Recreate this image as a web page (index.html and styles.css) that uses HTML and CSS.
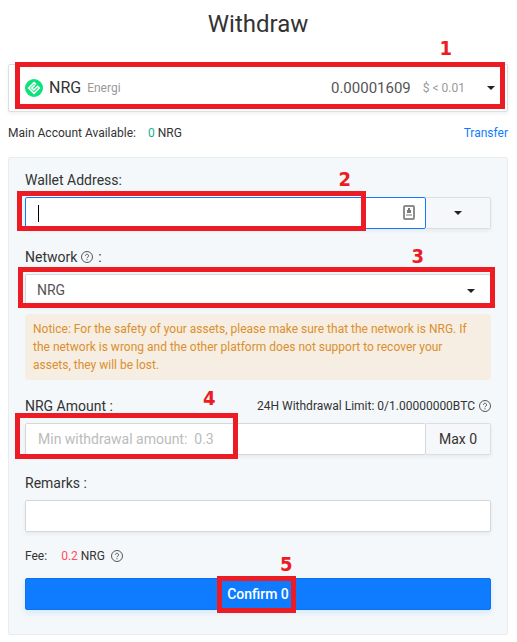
FILE: index.html
```html
<!DOCTYPE html>
<html lang="en">
<head>
<meta charset="utf-8">
<title>Withdraw</title>
<meta name="viewport" content="width=device-width, initial-scale=1">
<link rel="stylesheet" href="styles.css">
</head>
<body>
<svg width="0" height="0" class="defs" aria-hidden="true">
  <symbol id="help" viewBox="0 0 12 12">
    <circle cx="6" cy="6" r="5.5" fill="none" stroke="currentColor" stroke-width=".9"/>
    <path d="M4.4 4.700a1.600 1.500 0 1 1 2.500 1.300c-.6.4-.9.6-.9 1.200" fill="none" stroke="currentColor" stroke-width=".9"/>
    <path d="M5.500 8.200h1v1h-1z" fill="currentColor"/>
  </symbol>
  <symbol id="caret" viewBox="0 0 8 4">
    <path d="M0 0h8L4 4z" fill="currentColor"/>
  </symbol>
</svg>
<main class="page">
  <h1 class="title">Withdraw</h1>

  <div class="anchor">
    <button type="button" class="coin">
      <svg class="coin-logo" viewBox="0 0 18 18" aria-hidden="true">
        <circle cx="9" cy="9" r="9" fill="#0be27c"/>
        <path d="M11 5.500 9 3.700 3.700 9 9 14.300 14.300 9 12.600 7.300 8.800 11 6.800 9 9.800 6.200" fill="none" stroke="#fff" stroke-width="1.600"/>
      </svg>
      <span class="coin-code">NRG</span>
      <span class="coin-name">Energi</span>
      <span class="coin-balance">0.00001609</span>
      <span class="coin-value">$ &lt; 0.01</span>
      <svg class="caret"><use href="#caret"/></svg>
    </button>
    <span class="mark mark-coin"></span>
    <span class="step step-coin">1</span>
  </div>

  <div class="account">
    <span>Main Account Available:</span>
    <span class="account-sum"><span class="green">0</span> NRG</span>
    <a class="transfer" href="#">Transfer</a>
  </div>

  <form class="panel">
    <div class="field anchor">
      <div class="label-row"><label for="address">Wallet Address:</label></div>
      <div class="group">
        <input class="control control-active" id="address" type="text">
        <svg class="autofill" viewBox="0 0 12 15" aria-hidden="true">
          <rect x="1" y="1" width="10" height="13" rx="1" fill="#fff" stroke="#8c8c8c" stroke-width="2"/>
          <path d="M5 3h2v2h1v3H4V5h1z" fill="#777"/>
          <path d="M3 9h6v2H3z" fill="#bbb"/>
        </svg>
        <span class="cursor"></span>
        <button type="button" class="addon" aria-label="Saved addresses"><svg class="caret"><use href="#caret"/></svg></button>
      </div>
      <span class="mark mark-address"></span>
      <span class="step step-address">2</span>
    </div>

    <div class="field field-network anchor">
      <div class="label-row"><label for="network">Network</label><svg class="help"><use href="#help"/></svg><span class="colon">:</span></div>
      <div class="group">
        <select class="control" id="network"><option>NRG</option></select>
        <svg class="caret caret-select"><use href="#caret"/></svg>
      </div>
      <span class="mark mark-network"></span>
      <span class="step step-network">3</span>
    </div>

    <p class="notice">Notice: For the safety of your assets, please make sure that the network is NRG. If the network is wrong and the other platform does not support to recover your assets, they will be lost.</p>

    <div class="field anchor">
      <div class="label-row">
        <label for="amount">NRG Amount :</label>
        <span class="limit">24H Withdrawal Limit: 0/1.00000000BTC <svg class="help"><use href="#help"/></svg></span>
      </div>
      <div class="group">
        <input class="control" id="amount" type="text" placeholder="Min withdrawal amount:&nbsp; 0.3">
        <button type="button" class="addon">Max 0</button>
      </div>
      <span class="mark mark-amount"></span>
      <span class="step step-amount">4</span>
    </div>

    <div class="field">
      <div class="label-row"><label for="remarks">Remarks :</label></div>
      <div class="group"><input class="control" id="remarks" type="text"></div>
    </div>

    <div class="fee"><span>Fee:</span><span class="fee-sum"><span class="red">0.2</span> NRG</span><svg class="help"><use href="#help"/></svg></div>

    <div class="anchor">
      <button type="button" class="confirm">Confirm 0</button>
      <span class="mark mark-confirm"></span>
      <span class="step step-confirm">5</span>
    </div>
  </form>
</main>
</body>
</html>
```
FILE: styles.css
```css
* { box-sizing: border-box; }

body {
  margin: 0;
  background: #fff;
  color: #333;
  font: 14px/20px Roboto, "Liberation Sans", sans-serif;
}

button, input, select { font: inherit; color: inherit; }

.defs { position: absolute; }

.page { padding: 8px 9px 6px 8px; }

.title {
  margin: 0 0 24px;
  font-size: 24px;
  line-height: 32px;
  font-weight: 400;
  text-align: center;
}

.anchor { position: relative; }

.caret {
  flex: none;
  width: 8px;
  height: 4px;
  color: #222;
}

.help {
  flex: none;
  width: 12px;
  height: 12px;
  color: #444;
}

/* Coin selector */
.coin {
  display: flex;
  align-items: center;
  width: 100%;
  height: 48px;
  padding: 0 12px 0 16px;
  border: 1px solid #dcdfe2;
  border-radius: 2px;
  background: #fff;
  box-shadow: 0 2px 4px rgba(0, 0, 0, .06);
}

.coin-logo { width: 18px; height: 18px; margin-right: 6px; }
.coin-code { font-size: 16px; }
.coin-name { margin-left: 6px; font-size: 12px; color: #999; }
.coin-balance { margin-left: auto; font-size: 15px; color: #555; }
.coin-value { margin: 0 22px 0 12px; font-size: 12px; color: #999; }

.account {
  display: flex;
  align-items: center;
  gap: 12px;
  margin: 11px 0 14px;
  font-size: 12px;
}

.green { color: #12b090; }
.red { color: #ff4d5e; }

.transfer {
  margin-left: auto;
  color: #0f7cff;
  text-decoration: none;
}

/* Form */
.panel {
  padding: 12px 16px 24px;
  border: 1px solid #e8edf0;
  border-radius: 2px;
  background: #f4f8fa;
}

.field { margin-bottom: 18px; }
.field-network { margin-bottom: 8px; }

.label-row {
  display: flex;
  align-items: center;
  height: 20px;
  margin-bottom: 7px;
}

.label-row .help { margin-left: 4px; }
.colon { margin-left: 5px; }

.limit {
  display: flex;
  align-items: center;
  margin-left: auto;
  font-size: 12px;
}

.group {
  position: relative;
  display: flex;
  height: 32px;
  border-radius: 2px;
  box-shadow: 0 2px 4px rgba(0, 0, 0, .06);
}

.control {
  flex: 1;
  min-width: 0;
  margin: 0;
  padding: 0 12px;
  border: 1px solid #d5d8db;
  border-radius: 2px;
  background: #fff;
  appearance: none;
  outline: 0;
}

select.control { padding: 0 11px; color: #555; }
.control::placeholder { color: #bbb; opacity: 1; }
.control-active { border-color: #0f7cff; }

.addon {
  display: flex;
  align-items: center;
  justify-content: center;
  width: 65px;
  padding: 0;
  border: 1px solid #dcdfe2;
  border-left: 0;
  border-radius: 0 2px 2px 0;
  background: #f6f7fa;
}

.autofill {
  position: absolute;
  top: 8px;
  right: 76px;
  width: 12px;
  height: 15px;
}

.cursor {
  position: absolute;
  top: 8px;
  left: 13px;
  width: 1px;
  height: 17px;
  background: #000;
}

.caret-select {
  position: absolute;
  top: 15px;
  right: 16px;
}

.notice {
  margin: 0 0 16px;
  padding: 6px 20px 6px 8px;
  border-radius: 4px;
  background: #f6eee2;
  color: #dc8f2e;
  font-size: 12px;
  line-height: 18px;
}

.fee {
  display: flex;
  align-items: center;
  margin: -4px 0 12px;
  font-size: 12px;
}

.fee-sum { margin-left: 14px; }
.fee .help { margin-left: 6px; }

.confirm {
  display: block;
  width: 100%;
  height: 32px;
  padding: 0;
  border: 1px solid #0b73ee;
  border-radius: 2px;
  background: #0f7cff;
  color: #fff;
  font-weight: 500;
  box-shadow: 0 3px 6px rgba(15, 124, 255, .12);
}

/* Numbered walkthrough marks laid over the form */
.mark {
  position: absolute;
  border: 5px solid #ed1c24;
  pointer-events: none;
}

.step {
  position: absolute;
  color: #ed1c24;
  font: bold 20px/20px "DejaVu Sans Condensed", "DejaVu Sans", sans-serif;
}

.mark-coin { top: -2px; bottom: 3px; left: 7px; right: 3px; }
.step-coin { top: -26px; right: 56px; }
.mark-address { top: 21px; bottom: -2px; left: -8px; right: 125px; }
.step-address { top: -1px; right: 140px; }
.mark-network { top: 20px; bottom: -2px; left: -7px; right: -4px; }
.step-network { top: -1px; right: 67px; }
.mark-amount { top: 17px; bottom: -4px; left: -10px; width: 223px; }
.step-amount { top: -8px; left: 178px; }
.mark-confirm { top: -2px; bottom: -3px; left: 50%; width: 79px; margin-left: -41px; }
.step-confirm { top: -24px; left: 50%; margin-left: 22px; }
```
